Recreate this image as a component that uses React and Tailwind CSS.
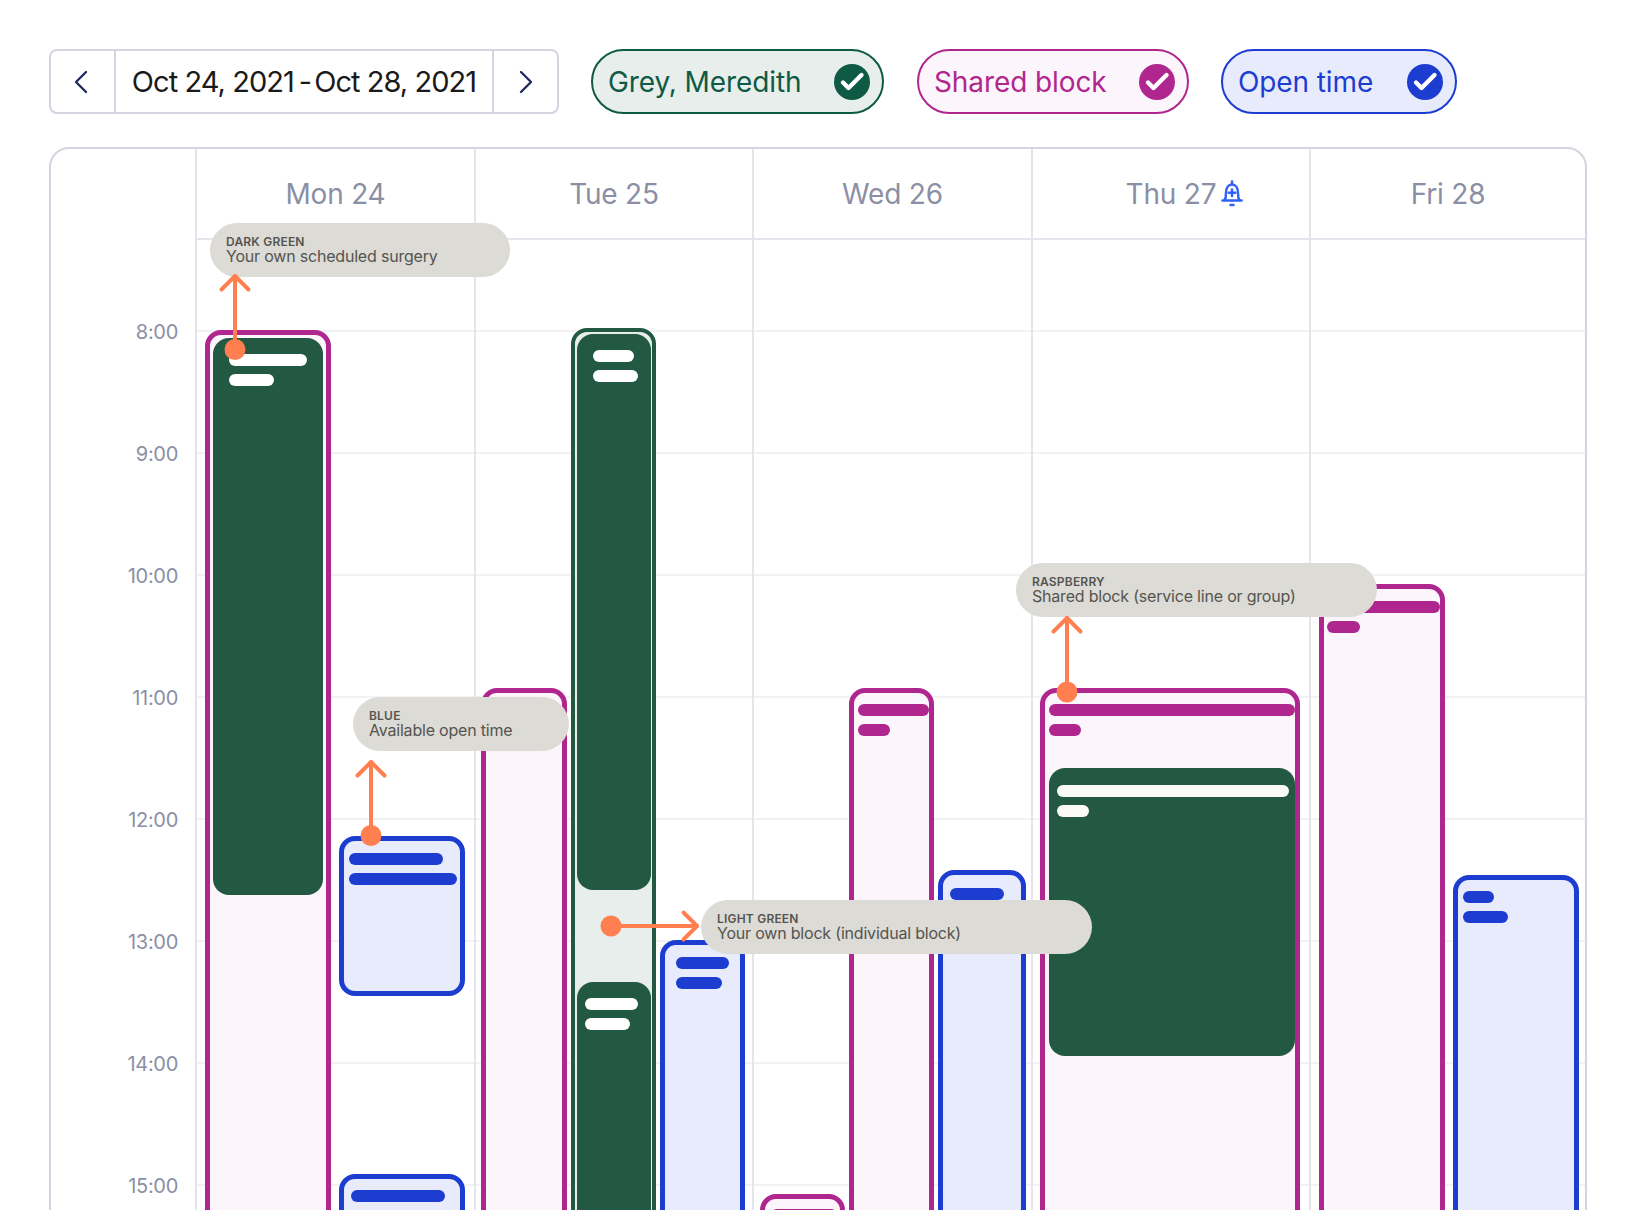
import React from "react";
import { ChevronLeft, ChevronRight } from "lucide-react";

const days = ["Mon 24", "Tue 25", "Wed 26", "Thu 27", "Fri 28"];
const hours = ["8:00", "9:00", "10:00", "11:00", "12:00", "13:00", "14:00", "15:00"];

function Check({ className }) {
  return (
    <span className={`flex h-[36px] w-[36px] items-center justify-center rounded-full ${className}`}>
      <svg width="36" height="36" viewBox="0 0 36 36" fill="none" stroke="white" strokeWidth="4.4" strokeLinecap="round" strokeLinejoin="round">
        <path d="M9 18.500l5.500 5.500L27.500 11" />
      </svg>
    </span>
  );
}

function Pill({ label, className, checkClass }) {
  return (
    <div className={`flex h-[65px] items-center justify-between rounded-full border-2 pl-[15px] pr-[12px] text-[28px] tracking-[-0.1px] ${className}`}>
      <span>{label}</span>
      <Check className={checkClass} />
    </div>
  );
}

function Bell() {
  return (
    <svg className="absolute left-full top-[7px] ml-[5px]" width="22" height="27" viewBox="0 0 22 27" fill="none" stroke="#2f62f5" strokeWidth="2.500" strokeLinecap="round" strokeLinejoin="round">
      <path d="M11 1.500v2.500" />
      <path d="M3.800 20c.9-1.500 1.200-3.500 1.200-7 0-5.500 2.500-8.500 6-8.500s6 3 6 8.500c0 3.500.3 5.500 1.200 7" />
      <path d="M1.500 20.500h19" />
      <path d="M9.500 25h3" />
      <path d="M11 9.500v6.500M7.800 12.700h6.400" />
    </svg>
  );
}

function Bar({ className }) {
  return <div className={`h-[12px] rounded-full ${className}`} />;
}

// raspberry = shared block, blue = open time, light green = own block
function Shared({ className, children }) {
  return <div className={`absolute rounded-[16px] border-[5px] border-[#b0268f] bg-[#fcf5fc] ${className}`}>{children}</div>;
}

function Open({ className, children }) {
  return <div className={`absolute rounded-[16px] border-[5px] border-[#1d3dd1] bg-[#e8ebfc] ${className}`}>{children}</div>;
}

function Surgery({ className, children }) {
  return <div className={`flex flex-col gap-[8px] rounded-[16px] bg-[#235843] ${className}`}>{children}</div>;
}

function Tip({ className, title, text }) {
  return (
    <div className={`absolute flex h-[54px] flex-col justify-center rounded-full bg-[#dcdbd6] pl-[16px] text-[#55544f] ${className}`}>
      <div className="text-[12px] font-semibold leading-[13px] tracking-[0.2px]">{title}</div>
      <div className="text-[16px] leading-[17px] tracking-[-0.2px]">{text}</div>
    </div>
  );
}

function Arrow({ d, head, cx, cy }) {
  return (
    <g fill="none" stroke="#ff7f50" strokeWidth="4" strokeLinecap="round" strokeLinejoin="round">
      <path d={d} />
      <path d={head} />
      <circle cx={cx} cy={cy} r="10.500" fill="#ff7f50" stroke="none" />
    </g>
  );
}

function DayColumn({ children }) {
  return (
    <div className="relative border-l-2 border-[#e3e4ec]">
      <div className="h-[90px]" />
      {hours.map((h) => (
        <div key={h} className="h-[122px] border-t-2 border-[#f2f2f5]" />
      ))}
      {children}
    </div>
  );
}

export default function App() {
  return (
    <div className="relative h-screen overflow-hidden bg-white px-[49px] pt-[49px] font-['Inter',sans-serif]">
      {/* toolbar */}
      <div className="flex gap-[33px]">
        <div className="-mr-px flex h-[65px] w-[510px] items-center rounded-[8px] border-2 border-[#d3d5e0] text-[#1a1a1a]">
          <div className="flex h-full w-[65px] items-center justify-center border-r-2 border-[#d3d5e0] pr-[3px]">
            <ChevronLeft size={40} strokeWidth={1.4} className="text-[#1f2a5c]" />
          </div>
          <div className="flex flex-1 items-center justify-center gap-[3px] whitespace-nowrap text-[29px] tracking-[-0.95px]">
            <span>Oct 24, 2021</span>
            <span className="ml-[2px]">-</span>
            <span>Oct 28, 2021</span>
          </div>
          <div className="flex h-full w-[65px] items-center justify-center border-l-2 border-[#d3d5e0]">
            <ChevronRight size={40} strokeWidth={1.4} className="text-[#1f2a5c]" />
          </div>
        </div>
        <Pill label="Grey, Meredith" className="w-[293px] border-[#0f5a45] bg-[#e7eeeb] text-[#0f5a45]" checkClass="bg-[#0f5a45]" />
        <Pill label="Shared block" className="-mr-px w-[272px] border-[#b0268f] bg-[#fcf5fc] text-[#b0268f]" checkClass="bg-[#b0268f]" />
        <Pill label="Open time" className="w-[236px] border-[#1d3dd1] bg-[#e8ebfc] text-[#1d3dd1]" checkClass="bg-[#1d3dd1]" />
      </div>

      {/* calendar */}
      <div className="mt-[33px] h-[1200px] rounded-t-[20px] border-2 border-[#d3d5e0]">
        <div className="grid h-[91px] grid-cols-[144px_279px_278px_279px_278px_1fr]">
          <div />
          {days.map((d, i) => (
            <div key={d} className="flex items-center justify-center border-b-2 border-l-2 border-[#e3e4ec] text-[28px] tracking-[-0.2px] text-[#8b8fa5]">
              <span className="relative">
                {d}
                {i === 3 && <Bell />}
              </span>
            </div>
          ))}
        </div>

        <div className="grid grid-cols-[144px_279px_278px_279px_278px_1fr]">
          <div className="pt-[31px]">
            {hours.map((h) => (
              <div key={h} className="flex h-[122px] items-center justify-end pr-[17px] text-[20px] tracking-[-0.3px] text-[#8b8fa5]">
                {h}
              </div>
            ))}
          </div>

          <DayColumn>
            <Shared className="left-[8px] top-[90px] h-[1000px] w-[126px] px-[3px] pt-[3px]">
              <Surgery className="h-[557px] pl-[16px] pt-[16px]">
                <Bar className="w-[78px] bg-white" />
                <Bar className="w-[45px] bg-white" />
              </Surgery>
            </Shared>
            <Open className="left-[142px] top-[596px] flex h-[160px] w-[126px] flex-col gap-[8px] pl-[5px] pt-[12px]">
              <Bar className="w-[94px] bg-[#1d3dd1]" />
              <Bar className="w-[108px] bg-[#1d3dd1]" />
            </Open>
            <Open className="left-[142px] top-[934px] flex h-[300px] w-[126px] flex-col gap-[8px] pl-[7px] pt-[11px]">
              <Bar className="w-[94px] bg-[#1d3dd1]" />
              <Bar className="w-[100px] bg-[#1d3dd1]" />
            </Open>
          </DayColumn>

          <DayColumn>
            <Shared className="left-[5px] top-[448px] h-[700px] w-[86px]" />
            <div className="absolute left-[95px] top-[88px] h-[1100px] w-[85px] rounded-[16px] border-4 border-[#235843] bg-[#e7eeeb] pb-[1px] pl-[2px] pr-[1px] pt-[2px]">
              <Surgery className="h-[556px] pl-[16px] pt-[16px]">
                <Bar className="w-[41px] bg-white" />
                <Bar className="w-[45px] bg-white" />
              </Surgery>
              <Surgery className="mt-[92px] h-[400px] pl-[8px] pt-[16px]">
                <Bar className="w-[53px] bg-white" />
                <Bar className="w-[45px] bg-white" />
              </Surgery>
            </div>
            <Open className="left-[184px] top-[700px] flex h-[400px] w-[85px] flex-col gap-[8px] pl-[11px] pt-[12px]">
              <Bar className="w-[53px] bg-[#1d3dd1]" />
              <Bar className="w-[46px] bg-[#1d3dd1]" />
            </Open>
          </DayColumn>

          <DayColumn>
            <Shared className="left-[6px] top-[954px] h-[100px] w-[85px] pl-[6px] pt-[10px]">
              <Bar className="w-[66px] bg-[#b0268f]" />
            </Shared>
            <Shared className="left-[95px] top-[448px] flex h-[700px] w-[85px] flex-col gap-[8px] pl-[4px] pt-[11px]">
              <Bar className="w-[71px] bg-[#b0268f]" />
              <Bar className="w-[32px] bg-[#b0268f]" />
            </Shared>
            <Open className="left-[184px] top-[630px] h-[500px] w-[88px] pl-[7px] pt-[13px]">
              <Bar className="w-[54px] bg-[#1d3dd1]" />
            </Open>
          </DayColumn>

          <DayColumn>
            <Shared className="left-[7px] top-[448px] flex h-[700px] w-[260px] flex-col gap-[8px] pl-[4px] pt-[11px]">
              <Bar className="w-[246px] bg-[#b0268f]" />
              <Bar className="w-[32px] bg-[#b0268f]" />
              <Surgery className="mt-[24px] h-[288px] w-[246px] pl-[8px] pt-[17px]">
                <Bar className="w-[232px] bg-[#fafaf7]" />
                <Bar className="w-[32px] bg-[#fafaf7]" />
              </Surgery>
            </Shared>
          </DayColumn>

          <DayColumn>
            <Shared className="left-[8px] top-[344px] flex h-[900px] w-[126px] flex-col gap-[8px] pl-[3px] pt-[12px]">
              <Bar className="w-[113px] bg-[#b0268f]" />
              <Bar className="w-[33px] bg-[#b0268f]" />
            </Shared>
            <Open className="left-[142px] top-[635px] flex h-[500px] w-[126px] flex-col gap-[8px] pl-[5px] pt-[11px]">
              <Bar className="w-[31px] bg-[#1d3dd1]" />
              <Bar className="w-[45px] bg-[#1d3dd1]" />
            </Open>
          </DayColumn>
        </div>
      </div>

      {/* annotations */}
      <Tip className="left-[210px] top-[223px] w-[300px]" title="DARK GREEN" text="Your own scheduled surgery" />
      <Tip className="left-[353px] top-[697px] w-[216px]" title="BLUE" text="Available open time" />
      <Tip className="left-[701px] top-[900px] w-[391px]" title="LIGHT GREEN" text="Your own block (individual block)" />
      <Tip className="left-[1016px] top-[563px] w-[361px]" title="RASPBERRY" text="Shared block (service line or group)" />
      <svg className="absolute left-0 top-0" width="1636" height="1210">
        <Arrow d="M235 349V276" head="M221.500 289.500L235 276l13.500 13.500" cx={235} cy={349.500} />
        <Arrow d="M371 835V762" head="M357.500 775.500L371 762l13.500 13.500" cx={371} cy={835.500} />
        <Arrow d="M611 926H697" head="M683.500 912.500L697 926l-13.500 13.500" cx={611} cy={926} />
        <Arrow d="M1067 692V618" head="M1053.500 631.500L1067 618l13.500 13.500" cx={1067} cy={692} />
      </svg>
    </div>
  );
}
